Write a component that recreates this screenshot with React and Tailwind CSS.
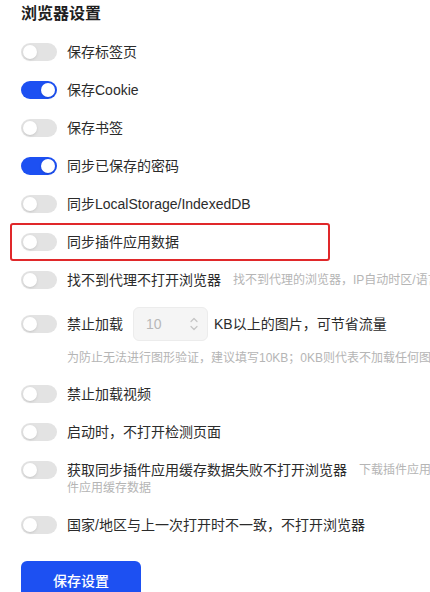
import { useState } from 'react'

// Browser settings panel — toggle list with inline help texts, clipped at the right edge.

const FONT = { fontFamily: '"Liberation Sans", "Noto Sans CJK SC", sans-serif' }
const HELP = 'whitespace-nowrap text-xs text-[#b5b5b5]'

function Toggle({ on, onChange }) {
  return (
    <button
      type="button"
      onClick={() => onChange(!on)}
      className={
        'relative h-[18px] w-9 shrink-0 rounded-full transition-colors ' +
        (on ? 'bg-[#1d50f2]' : 'bg-[#e3e3e3]')
      }
    >
      <span
        className={
          'absolute top-[2px] size-[14px] rounded-full bg-white shadow-sm transition-all ' +
          (on ? 'left-[20px]' : 'left-[2px]')
        }
      />
    </button>
  )
}

function Row({ on, onChange, children, className = '' }) {
  return (
    <div className={'flex h-[22px] items-center gap-[10px] ' + className}>
      <Toggle on={on} onChange={onChange} />
      {children}
    </div>
  )
}

export default function App() {
  const [s, setS] = useState({
    tabs: false,
    cookie: true,
    bookmark: false,
    password: true,
    storage: false,
    plugin: false,
    proxy: false,
    image: false,
    video: false,
    detect: false,
    pluginCache: false,
    region: false,
  })
  const set = (k) => (v) => setS((p) => ({ ...p, [k]: v }))

  return (
    <div className="h-[592px] w-[430px] overflow-hidden bg-white text-sm text-[#2b2b2b]" style={FONT}>
      <div className="w-[700px] px-[21px] pt-[2px]">
        <h2 className="text-base font-semibold leading-6 text-[#1f1f1f]">浏览器设置</h2>

        <Row on={s.tabs} onChange={set('tabs')} className="mt-[15px]">
          <span>保存标签页</span>
        </Row>
        <Row on={s.cookie} onChange={set('cookie')} className="mt-4">
          <span>保存Cookie</span>
        </Row>
        <Row on={s.bookmark} onChange={set('bookmark')} className="mt-4">
          <span>保存书签</span>
        </Row>
        <Row on={s.password} onChange={set('password')} className="mt-4">
          <span>同步已保存的密码</span>
        </Row>
        <Row on={s.storage} onChange={set('storage')} className="mt-4">
          <span>同步LocalStorage/IndexedDB</span>
        </Row>

        <div className="-mx-[11px] mt-[8px] w-[320px] rounded-[3px] border-2 border-[#e0282a] px-[9px] py-[6px]">
          <Row on={s.plugin} onChange={set('plugin')}>
            <span>同步插件应用数据</span>
          </Row>
        </div>

        <Row on={s.proxy} onChange={set('proxy')} className="mt-[8px]">
          <span className="whitespace-nowrap">找不到代理不打开浏览器</span>
          <span className={HELP + ' ml-[2px]'}>找不到代理的浏览器，IP自动时区/语言等设置将无法生效</span>
        </Row>

        <div className="mt-4 flex h-[34px] items-center gap-[10px]">
          <Toggle on={s.image} onChange={set('image')} />
          <span className="whitespace-nowrap">禁止加载</span>
          <div className="flex h-[34px] w-[75px] items-center justify-between rounded-md border border-[#ececec] bg-[#f5f5f5] pl-3 pr-2 text-[#b8b8b8]">
            <span>10</span>
            <svg width="10" height="18" viewBox="0 0 10 18" fill="none" stroke="#c4c4c4" strokeWidth="1.2" strokeLinecap="round" strokeLinejoin="round">
              <path d="M2 6.5 5 3.5 8 6.5" />
              <path d="M2 11.5 5 14.5 8 11.5" />
            </svg>
          </div>
          <span className="-ml-[4px] whitespace-nowrap">KB以上的图片，可节省流量</span>
        </div>
        <div className={HELP + ' mt-2 pl-[46px] leading-[18px]'}>
          为防止无法进行图形验证，建议填写10KB；0KB则代表不加载任何图片
        </div>

        <Row on={s.video} onChange={set('video')} className="mt-4">
          <span>禁止加载视频</span>
        </Row>
        <Row on={s.detect} onChange={set('detect')} className="mt-4">
          <span>启动时，不打开检测页面</span>
        </Row>

        <Row on={s.pluginCache} onChange={set('pluginCache')} className="mt-4">
          <span className="whitespace-nowrap">获取同步插件应用缓存数据失败不打开浏览器</span>
          <span className={HELP + ' ml-[2px]'}>下载插件应用缓存数据失败时不打开浏览器，防止丢失插</span>
        </Row>
        <div className={HELP + ' pl-[46px] leading-[14px]'}>件应用缓存数据</div>

        <Row on={s.region} onChange={set('region')} className="mt-[19px]">
          <span>国家/地区与上一次打开时不一致，不打开浏览器</span>
        </Row>

        <button
          type="button"
          className="mt-[25px] h-10 w-[120px] rounded-md bg-[#1d50f2] text-sm font-medium text-white"
        >
          保存设置
        </button>
      </div>
    </div>
  )
}
